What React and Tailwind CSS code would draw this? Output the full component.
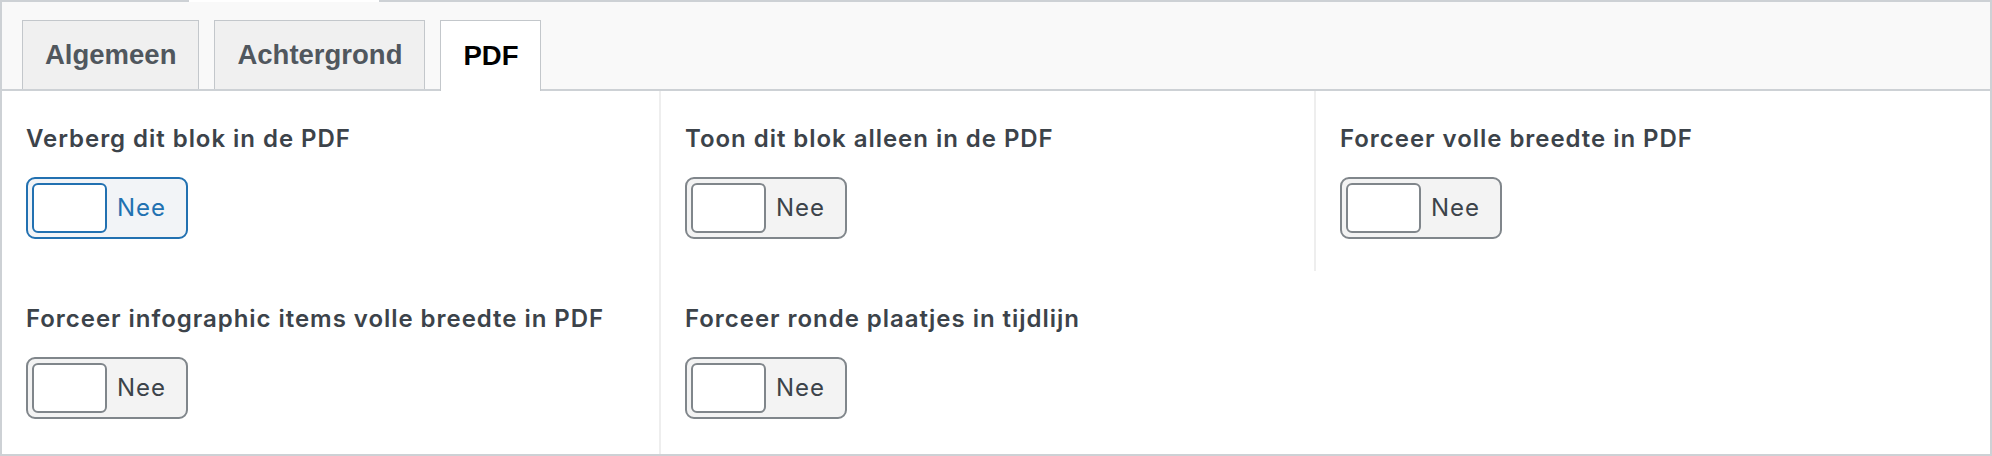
import React, { useState } from "react";

const tabs = ["Algemeen", "Achtergrond", "PDF"];

// Ja/Nee schakelaar zoals in het ACF-paneel
const Toggle = ({ focused }) => (
  <div
    className={`flex items-center w-[162px] h-[62px] p-1 rounded-[9px] border-2 ${
      focused ? "border-[#2271b1] bg-[#f2f4f7]" : "border-[#80868b] bg-[#f3f3f3]"
    }`}
  >
    <div
      className={`w-[75px] h-full rounded-[6px] border-2 bg-white ${
        focused ? "border-[#2271b1]" : "border-[#80868b]"
      }`}
    />
    <span
      className={`ml-[10px] text-[24px] tracking-[0.04em] ${focused ? "text-[#2271b1]" : "text-[#3c434a]"}`}
    >
      Nee
    </span>
  </div>
);

const Field = ({ label, focused, line }) => (
  <div className={`pt-[30px] pb-[32px] pl-6 pr-6 ${line ? "border-l-2 border-[#eeeeee]" : ""}`}>
    <div className="text-[24px] leading-[36px] tracking-[0.04em] font-semibold text-[#3c434a] mb-5">
      {label}
    </div>
    <Toggle focused={focused} />
  </div>
);

export default function App() {
  const [active, setActive] = useState("PDF");

  return (
    <div className="w-[1992px] h-[456px] bg-white" style={{ fontFamily: "Inter, 'Noto Sans', sans-serif" }}>
      <div className="relative h-full border-2 border-[#cdd1d5] flex flex-col">
        {/* wit stukje over de bovenrand */}
        <div className="absolute -top-[2px] left-[187px] w-[190px] h-[2px] bg-white" />

        {/* Tabs */}
        <div className="flex items-end gap-[15px] pl-5 pt-[18px] bg-[#f9f9f9] border-b-2 border-[#cdd1d5]">
          {tabs.map((t) => (
            <button
              key={t}
              onClick={() => setActive(t)}
              className={`px-[22px] border border-b-0 border-[#c3c7cb] font-bold text-[27.5px] ${
                active === t
                  ? "h-[71px] -mb-[2px] bg-white text-black"
                  : "h-[69px] bg-[#f0f0f0] text-[#50575e]"
              }`}
              style={{ fontFamily: "'Liberation Sans', Arial, sans-serif" }}
            >
              {t}
            </button>
          ))}
        </div>

        {/* Velden */}
        <div className="grid grid-cols-[657px_655px_1fr]">
          <Field label="Verberg dit blok in de PDF" focused />
          <Field label="Toon dit blok alleen in de PDF" line />
          <Field label="Forceer volle breedte in PDF" line />
        </div>
        <div className="grid grid-cols-[657px_1fr] flex-1">
          <Field label="Forceer infographic items volle breedte in PDF" />
          <Field label="Forceer ronde plaatjes in tijdlijn" line />
        </div>
      </div>
    </div>
  );
}
